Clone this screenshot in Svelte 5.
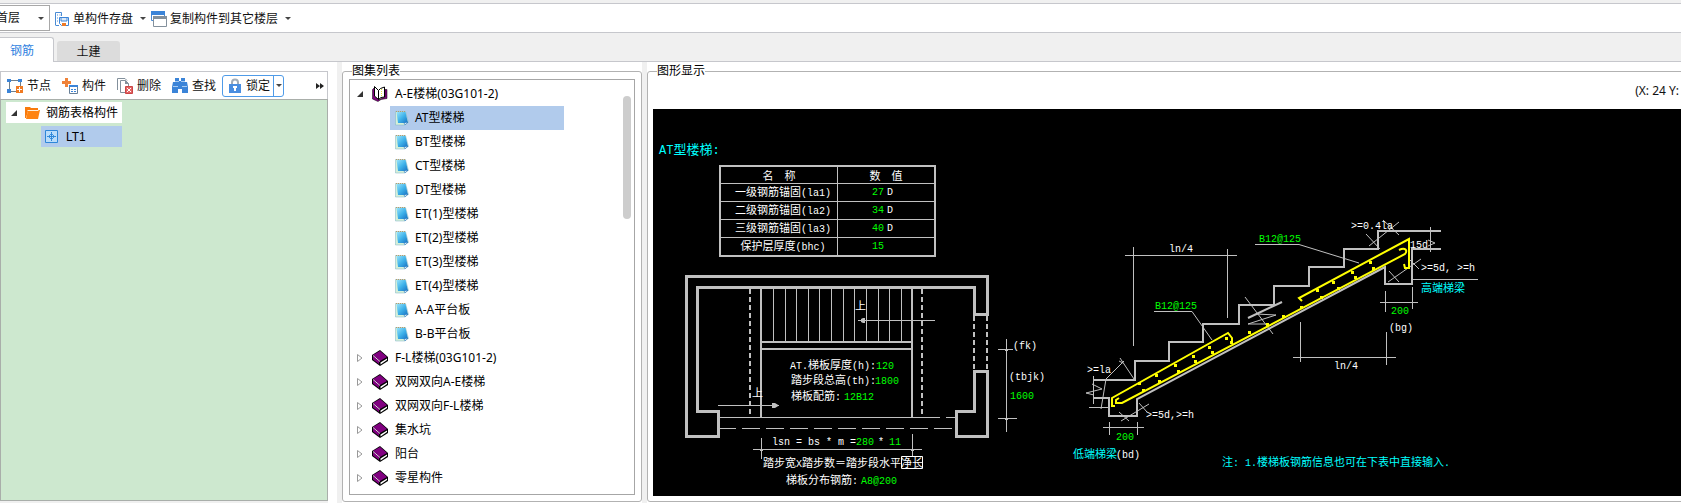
<script lang="ts">
	type Label = { x: number; y: number; text: string; kind?: string };

	let activeTab = $state('钢筋');
	let floor = $state('首层');
	let selected = $state('AT型楼梯');

	const tabs = ['钢筋', '土建'];
	const tools = [
		{ icon: 'node', label: '节点' },
		{ icon: 'part', label: '构件' },
		{ icon: 'remove', label: '删除' },
		{ icon: 'find', label: '查找' }
	];

	const openAtlas = {
		name: 'A-E楼梯(03G101-2)',
		items: [
			'AT型楼梯',
			'BT型楼梯',
			'CT型楼梯',
			'DT型楼梯',
			'ET(1)型楼梯',
			'ET(2)型楼梯',
			'ET(3)型楼梯',
			'ET(4)型楼梯',
			'A-A平台板',
			'B-B平台板'
		]
	};
	const closedAtlases = ['F-L楼梯(03G101-2)', '双网双向A-E楼梯', '双网双向F-L楼梯', '集水坑', '阳台', '零星构件'];

	const params = [
		{ name: '一级钢筋锚固(la1)', value: '27', unit: 'D' },
		{ name: '二级钢筋锚固(la2)', value: '34', unit: 'D' },
		{ name: '三级钢筋锚固(la3)', value: '40', unit: 'D' },
		{ name: '保护层厚度(bhc)', value: '15', unit: '' }
	];

	// drawing labels, y is the baseline
	const labels: Label[] = [
		{ x: 855, y: 310, text: '上' },
		{ x: 752, y: 397, text: '上' },
		{ x: 790, y: 369, text: 'AT.梯板厚度(h):' },
		{ x: 876, y: 369, text: '120', kind: 'value' },
		{ x: 791, y: 384, text: '踏步段总高(th):' },
		{ x: 875, y: 384, text: '1800', kind: 'value' },
		{ x: 791, y: 400, text: '梯板配筋:' },
		{ x: 844, y: 400, text: '12B12', kind: 'value' },
		{ x: 772, y: 445, text: 'lsn = bs * m =' },
		{ x: 856, y: 445, text: '280', kind: 'value' },
		{ x: 878, y: 445, text: '*' },
		{ x: 889, y: 445, text: '11', kind: 'value' },
		{ x: 763, y: 467, text: '踏步宽X踏步数\uff1d踏步段水平净长' },
		{ x: 786, y: 484, text: '梯板分布钢筋:' },
		{ x: 861, y: 484, text: 'A8@200', kind: 'value' },
		{ x: 1013, y: 349, text: '(fk)' },
		{ x: 1009, y: 380, text: '(tbjk)' },
		{ x: 1010, y: 399, text: '1600', kind: 'value' },
		{ x: 1169, y: 252, text: 'ln/4' },
		{ x: 1155, y: 309, text: 'B12@125', kind: 'value' },
		{ x: 1259, y: 242, text: 'B12@125', kind: 'value' },
		{ x: 1334, y: 369, text: 'ln/4' },
		{ x: 1351, y: 229, text: '>=0.4la' },
		{ x: 1410, y: 248, text: '15d' },
		{ x: 1421, y: 271, text: '>=5d, >=h' },
		{ x: 1421, y: 292, text: '高端梯梁', kind: 'note' },
		{ x: 1391, y: 314, text: '200', kind: 'value' },
		{ x: 1389, y: 331, text: '(bg)' },
		{ x: 1087, y: 373, text: '>=la' },
		{ x: 1146, y: 418, text: '>=5d,>=h' },
		{ x: 1116, y: 440, text: '200', kind: 'value' },
		{ x: 1073, y: 458, text: '低端梯梁', kind: 'note' },
		{ x: 1116, y: 458, text: '(bd)' },
		{ x: 1222, y: 466, text: '注: 1.楼梯板钢筋信息也可在下表中直接输入.', kind: 'note' }
	];

	const treads = [773, 785, 796, 808, 819, 831, 843, 854, 866, 878, 889, 901];

	const bars = [
		[1139, 383], [1156, 375], [1175, 365], [1193, 356], [1209, 347], [1226, 338],
		[1143, 390], [1159, 381], [1178, 371], [1195, 361], [1212, 352], [1231, 342],
		[1249, 332], [1267, 324], [1283, 316], [1301, 307],
		[1317, 290], [1333, 282], [1352, 272], [1370, 262],
		[1321, 297], [1338, 288], [1355, 277], [1373, 268]
	];

	// latin runs are set in the mono face, chinese in the CJK one
	function runs(text: string) {
		return text.match(/[\x20-\x7e]+|[^\x20-\x7e]+/g) ?? [];
	}

	function isLatin(run: string) {
		return run.charCodeAt(0) < 127;
	}
</script>

{#snippet mixed(text: string)}{#each runs(text) as run}<span class:latin={isLatin(run)}>{run}</span>{/each}{/snippet}

{#snippet icon(name: string)}
	<svg class="icon" width="16" height="16" viewBox="0 0 16 16" aria-hidden="true">
		{#if name === 'save'}
			<path d="M1.5 14V1.5h6V5M1.5 14.5H5" fill="none" stroke="#4a8bd4" />
			<path d="M3 4h1M3 7h1M3 10h1M5.5 4h1" stroke="#4a8bd4" />
			<path d="M5.5 6.5h9v8h-7l-2-2z" fill="#fff" stroke="#3b84d8" />
			<path d="M7 6.5h6V10H7z" fill="#dbe9f8" stroke="#3b84d8" />
			<path d="M8 12h4v3H8z" fill="#ee7a26" />
		{:else if name === 'copy'}
			<path d="M.5 .5h13v9H.5z" fill="#fff" stroke="#4a8bd4" />
			<path d="M0 0h14v4H0z" fill="#3b84d8" />
			<path d="M2.500 5.500h13v10h-13z" fill="#fff" stroke="#83909c" />
			<path d="M2 5h14v3H2z" fill="#83909c" />
		{:else if name === 'node'}
			<path d="M2.500 2.500h11v11h-11z" fill="#fff" stroke="#6f7f8d" />
			<path d="M0 1h4v3H0zM11 1h4v3h-4zM0 11h4v4H0z" fill="#3b84d8" />
			<path d="M9 8h7v7H9z" fill="#f07a22" />
			<path d="M12.500 9v5M10 11.500h5" stroke="#fff" />
		{:else if name === 'part'}
			<path d="M3 0h3v3h3v3H6v3H3V6H0V3h3z" fill="#f08238" />
			<path d="M7.500 7.500h8v8h-8z" fill="#fff" stroke="#687f96" />
			<path d="M7 7h9v2H7z" fill="#3b84d8" />
			<path d="M9 11.500h2M12 11.500h2M9 13.500h2M12 13.500h2" stroke="#3b84d8" />
		{:else if name === 'remove'}
			<path d="M.5 12V.5H8l2 2" fill="none" stroke="#83909c" />
			<path d="M3.500 14.500v-12h5l3 3v9z" fill="#fff" stroke="#83909c" />
			<path d="M8 2l4 4H8z" fill="#83909c" />
			<path d="M8.500 8.500h7v7h-7z" fill="#e36464" stroke="#ca4545" />
			<path d="M10 10l4 4M14 10l-4 4" stroke="#fff" />
		{:else if name === 'find'}
			<path d="M3 0h4v3h2V0h4v4h2l1 5v6h-6v-4H6v4H0V9l1-5h2z" fill="#3b84d8" />
			<path d="M1 8.500h5M10 8.500h5M3 3.500h4M9 3.500h4" stroke="#a9cdf3" />
		{:else if name === 'lock'}
			<path d="M5 7V4.500a3 3 0 0 1 6 0V7" fill="none" stroke="#a3adb8" stroke-width="2" />
			<path d="M2 6h12v9H2z" fill="#4a8ee0" />
			<path d="M7 8h2v5H7zM6 8h4v2H6z" fill="#fff" />
		{:else if name === 'folder'}
			<path d="M1 2h5l1 1h7v3H4l-2 7H1z" fill="#f97a0c" />
			<path d="M4 5h12l-2 9H2z" fill="#ff8412" />
			<path d="M3.500 5.500h11" stroke="#fff0dc" />
		{:else if name === 'component'}
			<path d="M1.500 1.500h12v12h-12z" fill="#b9dcfa" stroke="#2d86d8" />
			<path d="M7.500 3v9M3 7.500h9" stroke="#2d86d8" fill="none" />
			<path d="M7.500 4.500l3 3-3 3-3-3z" fill="none" stroke="#3a94e2" />
		{:else if name === 'page'}
			<defs>
				<linearGradient id="cover" x1="0" y1="0" x2="1" y2="1">
					<stop offset="0" stop-color="#9be4fa" />
					<stop offset=".5" stop-color="#3fb3ea" />
					<stop offset="1" stop-color="#1670c2" />
				</linearGradient>
			</defs>
			<path d="M.5 1.500h10l3 11-4 2.500H.5z" fill="#d5f0d9" stroke="#7fb2c4" stroke-width=".5" />
			<path d="M1.500 2h9l2.500 11H3z" fill="url(#cover)" />
			<path d="M9 13l4-1-3 3z" fill="#e4f2ff" stroke="#1269b4" stroke-width=".5" />
			<path d="M1 1.500h9" stroke="#b69b6a" stroke-dasharray="1 1" />
		{:else if name === 'book'}
			<path d="M0 5l8-5 8 7v4l-8 5-8-6z" fill="#000" />
			<path d="M1 5l7-4 7 6-7 4z" fill="#800080" />
			<path d="M1 6l6 5v3L1 9.500z" fill="#800080" />
			<path d="M8.500 12.500L15 8.500V10l-6.500 4.500z" fill="#fff" />
			<path d="M1 5.500l7 6" stroke="#e8d0e8" />
		{:else if name === 'open-book'}
			<path d="M.5 3.500L3 1v10l4 2.500 6-2.500V3.500h2v9l-6 1-3 2-5.500-2.500z" fill="#800080" stroke="#000" stroke-width=".5" />
			<path d="M2.500.500l4 4v9l-4-3.500z" fill="#fff" stroke="#000" />
			<path d="M6.500 4.500l2-2 4-1.500v10l-3.500.5-2.500 2z" fill="#fff" stroke="#000" />
			<path d="M9.500 3v7" stroke="#e4e036" stroke-dasharray="1 1" />
		{/if}
	</svg>
{/snippet}

<div class="app">
	<div class="toolbar">
		<label class="floor">
			<select bind:value={floor} aria-label="楼层">
				<option>首层</option>
			</select>
			<i class="caret"></i>
		</label>
		<button class="tool">{@render icon('save')}单构件存盘<i class="caret"></i></button>
		<button class="tool">{@render icon('copy')}复制构件到其它楼层<i class="caret"></i></button>
	</div>

	<div class="tabs">
		{#each tabs as tab}
			<button class="tab" class:active={activeTab === tab} onclick={() => (activeTab = tab)}>{tab}</button>
		{/each}
	</div>

	<main>
		<section class="components">
			<div class="actions">
				{#each tools as tool}
					<button class="action">{@render icon(tool.icon)}{tool.label}</button>
				{/each}
				<div class="split">
					<button class="lock">{@render icon('lock')}锁定</button>
					<button class="drop" aria-label="锁定选项"><i class="caret"></i></button>
				</div>
				<button class="more" aria-label="更多">
					<svg width="8" height="8" viewBox="0 0 8 8"><path d="M0 1l4 3-4 3zM4 1l4 3-4 3z" fill="#222" /></svg>
				</button>
			</div>
			<ul class="parts">
				<li>
					<button class="part root"><i class="opened"></i>{@render icon('folder')}钢筋表格构件</button>
				</li>
				<li>
					<button class="part leaf">{@render icon('component')}LT1</button>
				</li>
			</ul>
		</section>

		<div class="splitter"></div>

		<fieldset class="atlas">
			<legend>图集列表</legend>
			<div class="atlas-box">
				<ul>
					<li><button class="row"><i class="opened"></i>{@render icon('open-book')}{openAtlas.name}</button></li>
					{#each openAtlas.items as item}
						<li>
							<button class="row child" class:selected={selected === item} onclick={() => (selected = item)}>
								{@render icon('page')}{item}
							</button>
						</li>
					{/each}
					{#each closedAtlases as name}
						<li>
							<button class="row">
								<svg class="closed" width="6" height="8" viewBox="0 0 6 8"><path d="M.5.5v7L5 4z" fill="#fff" stroke="#999" /></svg>
								{@render icon('book')}{name}
							</button>
						</li>
					{/each}
				</ul>
				<div class="thumb"></div>
			</div>
		</fieldset>

		<div class="splitter"></div>

		<fieldset class="graph">
			<legend>图形显示</legend>
			<div class="coords">(X: 24 Y:</div>
			<div class="canvas">
				<svg class="drawing" width="1028" height="387" viewBox="653 109 1028 387">
					<text class="title" x="659" y="154"><tspan class="latin">AT</tspan>型楼梯<tspan class="latin">:</tspan></text>

					<!-- walls -->
					<g class="wall">
						<path d="M974.500 287.500H697.500V411.500H718.500V436.500H686.500V276.500H987.500V314.500H974.500Z" />
						<path d="M974.500 371.500H987.500V436.500H956.500V411.500H974.500Z" />
					</g>
					<g class="medium">
						<path d="M761 289V417M912 289V417M761 342H912M761 349H912" />
						<path d="M750 289V417M922 289V417M974 316V370M987 316V370" stroke-dasharray="5 3" />
					</g>
					<g class="thin">
						{#each treads as x}
							<path d="M{x}.5 289V341" />
						{/each}
						<path d="M720 417.500H940M946 417.500H956" />
						<path d="M718 428.500H955" stroke-dasharray="18 6" />
						<path d="M718 405.500H779M858 320.500H935" />
						<path d="M753 449.500H922M761.500 438V459M912.500 434V457" />
						<path d="M1006.500 339V432M998 349.500H1013M998 418.500H1017" />
						<path d="M901.500 456.500h21v12h-21z" stroke="#fff" />
					</g>
					<path class="head" d="M772 403h3l4 2.500-4 2.500h-3zM861 319l2-1h2v5h-2l-2-1z" />
					<path class="head" d="M760 449h3v2h-3zM911 449h3v2h-3zM1005 349h3v2h-3zM1005 418h3v2h-3z" />

					<!-- stair section -->
					<g class="medium">
						<path d="M1093 380H1135V361H1169V342H1203V324H1239V305H1274V286H1309V267H1344V249H1378V231H1441" />
						<path d="M1441 249H1412V284H1385V267L1137 399V416H1109V398H1093" />
						<path d="M1248 318L1282 302" />
					</g>
					<g class="thin">
						<path d="M1125 255.500H1237M1133.500 247V346M1227.500 249V318" />
						<path d="M1154 311.500H1192L1212 340M1255 244.500H1299L1359 263" />
						<path d="M1293 357.500H1396M1300.500 322V362M1386.500 332V365" />
						<path d="M1380 302.500H1418M1385.500 291V312M1412.500 287V309M1412 279.500H1478" />
						<path d="M1103 427.500H1144M1109.500 422V435M1137.500 422V435" />
						<path d="M1430.500 227V252M1428 240L1435 243L1428 246M1093.500 376V404M1089 407.500H1109" />
						<path d="M1245 297L1273 334M1256 314L1276 315L1248 324H1266" />
						<path d="M1366 234L1380 249M1369 246L1399 222M1383 220L1399 235" />
						<path d="M1409 259L1419 269M1421 259L1388 282M1389 271L1399 282" />
						<path d="M1092 384L1102 389L1086 393L1094 395M1106 379L1101 409" />
						<path d="M1120 358L1134 379M1124 361L1106 379M1119 361l4 2" />
						<path d="M1121 421L1149 404M1119 412L1129 421M1139 403L1147 412" />
					</g>
					<g class="rebar">
						<path d="M1115 406H1112V398L1228 333L1232 338V343" />
						<path d="M1119 398L1116 400V403H1122L1405 254C1408 250 1405 247 1399 250" />
						<path d="M1302 301L1299 298L1409 239V268H1405L1404 264" />
					</g>
					{#each bars as [x, y]}
						<rect x={x - 1} y={y - 1} width="3" height="3" fill="#ff0" />
					{/each}

					{#each labels as label}
						<text class={label.kind} x={label.x} y={label.y}>{#each runs(label.text) as run}<tspan class:latin={isLatin(run)}>{run}</tspan>{/each}</text>
					{/each}
				</svg>

				<table>
					<thead>
						<tr><th>名&emsp;称</th><th>数&emsp;值</th></tr>
					</thead>
					<tbody>
						{#each params as param}
							<tr>
								<td>{@render mixed(param.name)}</td>
								<td class="latin"><b>{param.value}</b>{param.unit}</td>
							</tr>
						{/each}
					</tbody>
				</table>
			</div>
		</fieldset>
	</main>
</div>

<style>
	:global(body) {
		margin: 0;
		background: #fff;
	}

	.app {
		display: flex;
		flex-direction: column;
		min-height: 100vh;
		overflow: hidden;
		background: #fff;
		color: #111;
		font: 12px/18px 'Noto Sans', 'Noto Sans CJK SC', sans-serif;
	}

	button,
	select {
		font: inherit;
		color: inherit;
		margin: 0;
		padding: 0;
		border: 0;
		background: none;
		white-space: nowrap;
	}

	ul {
		margin: 0;
		padding: 0;
		list-style: none;
	}

	.icon {
		flex: none;
	}

	.caret {
		flex: none;
		border: 3px solid transparent;
		border-top-color: #444;
		border-bottom: 0;
	}

	.opened {
		flex: none;
		width: 0;
		height: 0;
		border: 3px solid #333;
		border-top-color: transparent;
		border-left-color: transparent;
	}

	/* top toolbar */
	.toolbar {
		display: flex;
		align-items: center;
		height: 28px;
		border-top: 1px solid #c6c7cc;
		border-bottom: 1px solid #c6c7cc;
		box-shadow: 0 -3px #f0f0f0;
		margin-top: 3px;
	}

	.floor {
		display: flex;
		align-items: center;
		position: relative;
		flex: none;
		width: 72px;
		height: 26px;
		margin-left: -22px;
		border: 1px solid #a8a8a8;
		box-sizing: border-box;
	}

	.floor select {
		appearance: none;
		width: 100%;
		height: 100%;
		padding-left: 17px;
		outline: 0;
	}

	.floor .caret {
		position: absolute;
		right: 5px;
		pointer-events: none;
	}

	.tool {
		display: flex;
		align-items: center;
		gap: 3px;
		padding: 1px 0 0 4px;
	}

	.tool .caret {
		margin: 0 1px 0 4px;
	}

	/* tabs */
	.tabs {
		display: flex;
		align-items: flex-end;
		gap: 3px;
		height: 28px;
		background: #f0f0f0;
		border-bottom: 1px solid #c6c7cc;
	}

	.tab {
		width: 63px;
		height: 20px;
		padding-top: 1px;
		background: #dcdcdc;
		border-radius: 3px 3px 0 0;
	}

	.tab.active {
		width: 54px;
		height: 25px;
		margin-bottom: -1px;
		padding-right: 9px;
		background: #fff;
		color: #2f7fe0;
		border: 1px solid #c6c7cc;
		border-width: 1px 1px 0 0;
		border-radius: 0 3px 0 0;
	}

	main {
		display: flex;
		flex: 1;
	}

	.splitter {
		flex: none;
		width: 5px;
		background: #f0f0f0;
	}

	/* component list */
	.components {
		display: flex;
		flex-direction: column;
		flex: none;
		width: 328px;
		margin: 9px 9px 2px 0;
		box-shadow: 0 2px #f0f0f0;
	}

	.actions {
		display: flex;
		align-items: center;
		height: 27px;
		padding-left: 1px;
		border: 1px solid #c6c7cc;
		border-bottom: 0;
	}

	.action {
		display: flex;
		align-items: center;
		gap: 4px;
		width: 55px;
		padding-left: 5px;
		box-sizing: border-box;
	}

	.split {
		display: flex;
		height: 22px;
		width: 62px;
		box-sizing: border-box;
		border: 1px solid #4f9be8;
		border-radius: 3px;
	}

	.lock {
		display: flex;
		align-items: center;
		gap: 3px;
		padding: 0 3px 0 4px;
	}

	.drop {
		display: flex;
		align-items: center;
		padding: 0 2px;
		border-left: 1px solid #4f9be8;
	}

	.more {
		display: flex;
		margin-left: auto;
		padding-right: 3px;
	}

	.parts {
		flex: 1;
		padding: 2px 0 0 5px;
		background: #cde8cf;
		border: 1px solid #a9aeaa;
	}

	.part {
		display: flex;
		align-items: center;
		height: 21px;
		margin-bottom: 3px;
		color: #000;
	}

	.root {
		width: 116px;
		padding-left: 5px;
		background: #fff;
	}

	.root .opened {
		margin-right: 7px;
	}

	.root :global(.icon) {
		margin-right: 6px;
	}

	.leaf {
		width: 81px;
		margin-left: 35px;
		padding-left: 3px;
		gap: 6px;
		background: #b1cbec;
		font-family: 'Liberation Sans', sans-serif;
	}

	/* group boxes */
	fieldset {
		display: flex;
		flex-direction: column;
		box-sizing: border-box;
		min-width: 0;
		margin: 0 0 1px;
		border: 1px solid #b2b2b2;
		border-radius: 3px;
	}

	legend {
		padding: 0;
		color: #000;
	}

	.atlas {
		flex: none;
		width: 300px;
		padding: 0 6px;
	}

	.atlas legend {
		margin-left: 3px;
	}

	.atlas-box {
		display: flex;
		justify-content: space-between;
		flex: 1;
		margin: -1px 0 6px;
		padding: 2px 3px 3px 7px;
		border: 1px solid #a6a6a6;
	}

	.row {
		display: flex;
		align-items: center;
		height: 24px;
		color: #000;
	}

	.row .opened {
		margin-right: 9px;
	}

	.row .closed {
		margin-right: 9px;
	}

	.row :global(.icon) {
		margin-right: 7px;
	}

	.child {
		width: 174px;
		margin-left: 33px;
		padding-left: 5px;
	}

	.child :global(.icon) {
		margin-right: 4px;
	}

	.selected {
		background: #b1cbec;
	}

	.thumb {
		width: 8px;
		height: 123px;
		margin-top: 14px;
		border-radius: 4px;
		background: #cdcdcd;
	}

	.graph {
		flex: 1;
		margin-right: -6px;
		padding: 0 5px 5px;
	}

	.graph legend {
		margin-left: 4px;
	}

	.coords {
		height: 29px;
		padding-right: 2px;
		line-height: 21px;
		text-align: right;
		white-space: nowrap;
	}

	.canvas {
		position: relative;
		flex: 1;
		background: #000;
		overflow: hidden;
	}

	/* drawing */
	.drawing {
		display: block;
		fill: none;
	}

	.drawing,
	table {
		font: 11px/14px 'Noto Sans CJK SC', sans-serif;
	}

	.drawing text {
		fill: #fff;
		white-space: pre;
	}

	.latin {
		font-family: 'Liberation Mono', 'Noto Sans CJK SC', monospace;
		font-size: 10px;
	}

	.drawing .value {
		fill: #0f0;
	}

	.drawing .note {
		fill: #0ff;
	}

	.drawing .title {
		fill: #0ff;
		font-size: 13px;
	}

	.title .latin {
		font-size: 12px;
	}

	.wall {
		stroke: #c0c0c0;
		stroke-width: 3;
	}

	.medium {
		stroke: #c0c0c0;
		stroke-width: 2;
	}

	.thin {
		stroke: #c0c0c0;
	}

	.rebar {
		stroke: #ff0;
		stroke-width: 2;
	}

	.head {
		fill: #c0c0c0;
	}

	table {
		position: absolute;
		left: 66px;
		top: 56px;
		width: 217px;
		border: 2px solid #c0c0c0;
		border-collapse: collapse;
		table-layout: fixed;
		color: #fff;
	}

	th,
	td {
		height: 17px;
		padding: 0;
		border: 1px solid #c0c0c0;
		font-weight: normal;
		text-align: center;
	}

	th {
		height: 16px;
	}

	th:first-child {
		width: 116px;
	}

	td:first-child {
		padding-left: 8px;
	}

	td:last-child {
		padding-left: 34px;
		text-align: left;
	}

	b {
		margin-right: 3px;
		color: #0f0;
		font-weight: normal;
	}
</style>
